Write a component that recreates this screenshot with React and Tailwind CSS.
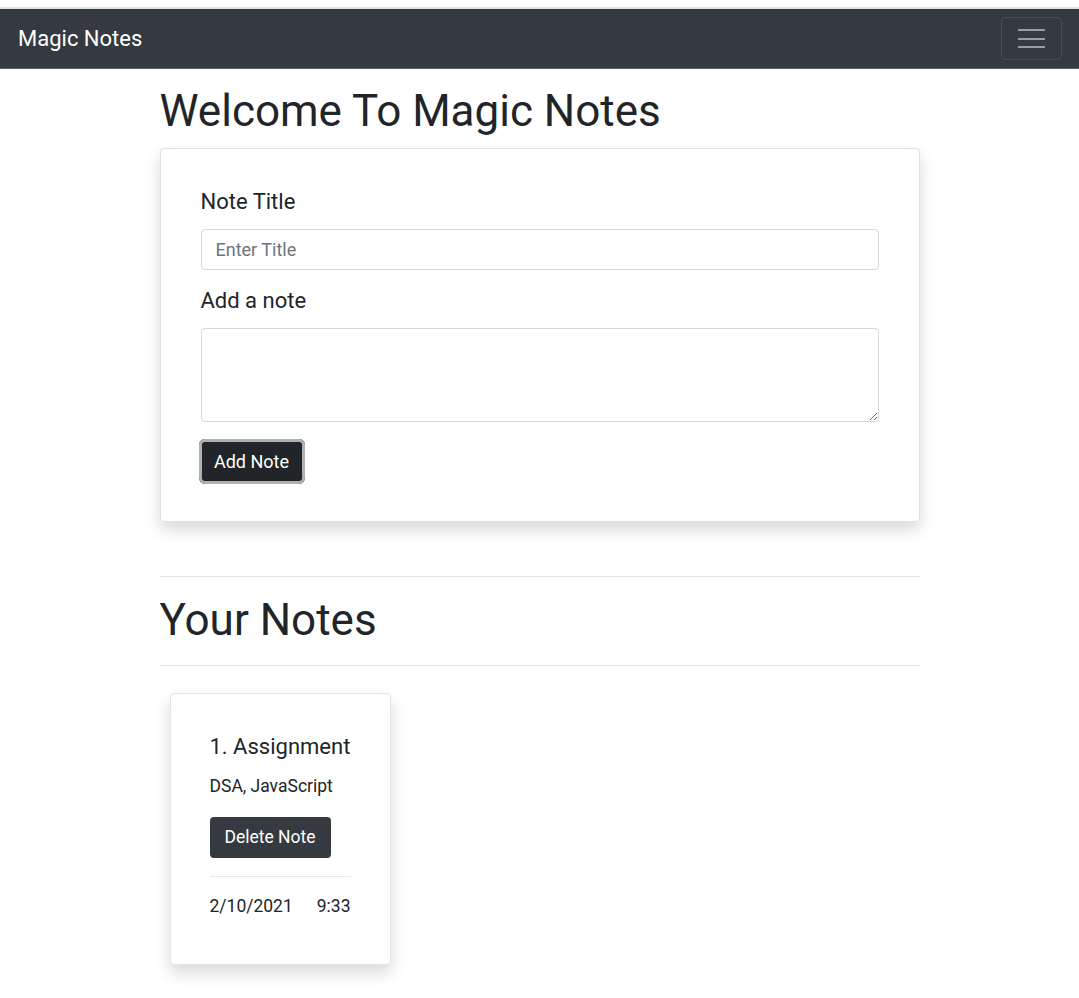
import React from "react";

const App = () => {
  return (
    <div className="min-h-screen bg-white text-[#212529] font-['Roboto',_'Liberation_Sans',_sans-serif]">
      <div className="h-[7px] bg-white" />
      <div className="h-[2px] bg-[#e2e2e2]" />
      <nav className="h-[60px] bg-[#343a40] flex items-center justify-between pl-[18px] pr-[17px] border-b border-[#5a5f64]">
        <span className="text-white text-[22px]">Magic Notes</span>
        <button className="w-[61px] h-[43px] border border-white/10 rounded-[5px] flex flex-col items-center justify-center gap-[6.5px]">
          <span className="block w-[27px] h-[2px] bg-white/50" />
          <span className="block w-[27px] h-[2px] bg-white/50" />
          <span className="block w-[27px] h-[2px] bg-white/50" />
        </button>
      </nav>

      <main className="w-[760px] mx-auto">
        <h1 className="text-[44px] leading-[1.2] mt-[16px] mb-[10px]">Welcome To Magic Notes</h1>

        <div className="border border-black/[.12] rounded-[4px] shadow-[0_8px_16px_rgba(0,0,0,0.15)] px-[40px] pt-[38px] pb-[37px]">
          <label className="block text-[22px] leading-[1.4] mb-[11px]">Note Title</label>
          <input
            className="block w-full h-[41px] border border-[#d6dade] rounded-[4px] px-[14px] text-[18px] placeholder:text-[#6c757d] outline-none"
            placeholder="Enter Title"
          />
          <label className="block text-[22px] leading-[1.4] mt-[16px] mb-[12px]">Add a note</label>
          <textarea className="block w-full h-[94px] border border-[#d6dade] rounded-[4px] px-[14px] py-[8px] text-[18px] outline-none resize-y" />
          <button className="mt-[17px] -ml-[2px] h-[45px] w-[106px] bg-[#212529] text-white text-[18px] rounded-[6px] ring-[3px] ring-[#aeb1b4] ring-inset border-0">
            Add Note
          </button>
        </div>

        <hr className="mt-[54px] border-0 border-t border-[#e3e3e3]" />
        <h1 className="text-[44px] leading-[1.2] mt-[17px] mb-[18px]">Your Notes</h1>
        <hr className="border-0 border-t border-[#e3e3e3]" />

        <div className="ml-[10px] mt-[27px] mb-[30px] w-[221px] border border-black/[.1] rounded-[4px] shadow-[0_8px_16px_rgba(0,0,0,0.15)] px-[39px] pt-[40px] pb-[45px]">
          <h5 className="text-[22px] leading-[1.2]">1. Assignment</h5>
          <p className="text-[17.5px] mt-[12px] leading-[1.5]">DSA, JavaScript</p>
          <button className="mt-[18px] h-[41px] w-[121px] bg-[#343a40] text-white text-[17.5px] rounded-[4px]">
            Delete Note
          </button>
          <hr className="mt-[18px] border-0 border-t border-[#e9e9e9]" />
          <div className="mt-[16px] flex justify-between text-[17.5px]">
            <span>2/10/2021</span>
            <span>9:33</span>
          </div>
        </div>
      </main>
    </div>
  );
};

export default App;
